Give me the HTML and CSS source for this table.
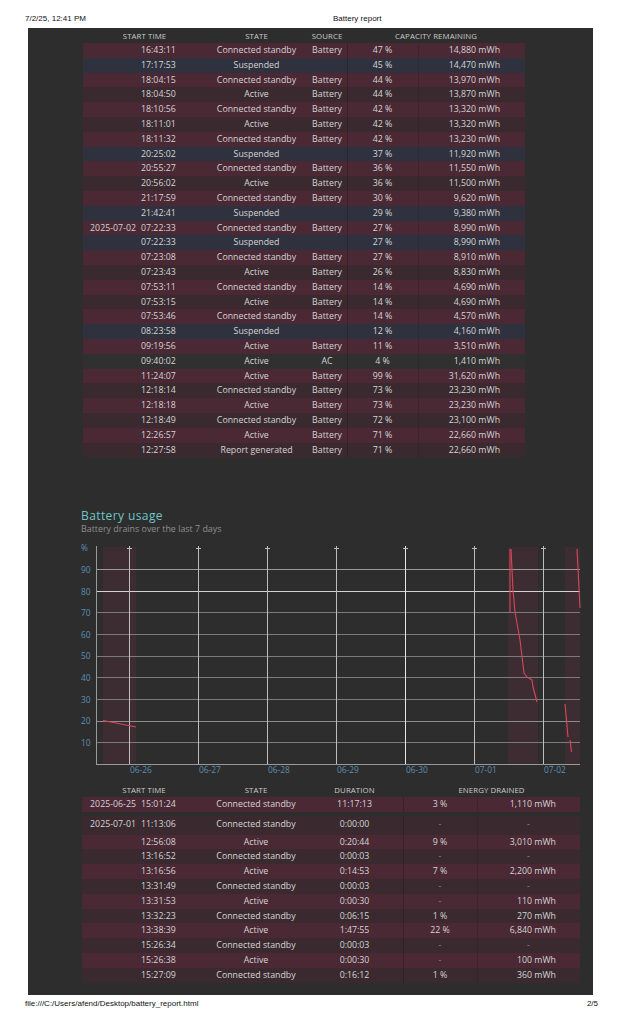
FILE: index.html
```html
<!DOCTYPE html>
<html lang="en">
<head>
<meta charset="utf-8">
<title>Battery report</title>
<link rel="stylesheet" href="styles.css">
</head>
<body>
<header class="print-head">
  <span>7/2/25, 12:41 PM</span>
  <span>Battery report</span>
</header>

<main class="sheet">
  <table class="tbl tbl-recent">
    <colgroup>
      <col class="w-date"><col class="w-time"><col class="w-state1"><col class="w-source"><col class="w-pct1"><col class="w-mwh1">
    </colgroup>
    <thead>
      <tr><td colspan="2">Start time</td><td>State</td><td>Source</td><td colspan="2">Capacity remaining</td></tr>
    </thead>
    <tbody>
      <tr class="odd"><td class="date"></td><td class="time">16:43:11</td><td class="state">Connected standby</td><td class="src">Battery</td><td class="pct">47 %</td><td class="mwh">14,880 mWh</td></tr>
      <tr class="susp"><td class="date"></td><td class="time">17:17:53</td><td class="state">Suspended</td><td class="src"></td><td class="pct">45 %</td><td class="mwh">14,470 mWh</td></tr>
      <tr class="odd"><td class="date"></td><td class="time">18:04:15</td><td class="state">Connected standby</td><td class="src">Battery</td><td class="pct">44 %</td><td class="mwh">13,970 mWh</td></tr>
      <tr class="even"><td class="date"></td><td class="time">18:04:50</td><td class="state">Active</td><td class="src">Battery</td><td class="pct">44 %</td><td class="mwh">13,870 mWh</td></tr>
      <tr class="odd"><td class="date"></td><td class="time">18:10:56</td><td class="state">Connected standby</td><td class="src">Battery</td><td class="pct">42 %</td><td class="mwh">13,320 mWh</td></tr>
      <tr class="even"><td class="date"></td><td class="time">18:11:01</td><td class="state">Active</td><td class="src">Battery</td><td class="pct">42 %</td><td class="mwh">13,320 mWh</td></tr>
      <tr class="odd"><td class="date"></td><td class="time">18:11:32</td><td class="state">Connected standby</td><td class="src">Battery</td><td class="pct">42 %</td><td class="mwh">13,230 mWh</td></tr>
      <tr class="susp"><td class="date"></td><td class="time">20:25:02</td><td class="state">Suspended</td><td class="src"></td><td class="pct">37 %</td><td class="mwh">11,920 mWh</td></tr>
      <tr class="odd"><td class="date"></td><td class="time">20:55:27</td><td class="state">Connected standby</td><td class="src">Battery</td><td class="pct">36 %</td><td class="mwh">11,550 mWh</td></tr>
      <tr class="even"><td class="date"></td><td class="time">20:56:02</td><td class="state">Active</td><td class="src">Battery</td><td class="pct">36 %</td><td class="mwh">11,500 mWh</td></tr>
      <tr class="odd"><td class="date"></td><td class="time">21:17:59</td><td class="state">Connected standby</td><td class="src">Battery</td><td class="pct">30 %</td><td class="mwh">9,620 mWh</td></tr>
      <tr class="susp"><td class="date"></td><td class="time">21:42:41</td><td class="state">Suspended</td><td class="src"></td><td class="pct">29 %</td><td class="mwh">9,380 mWh</td></tr>
      <tr class="odd"><td class="date">2025-07-02</td><td class="time">07:22:33</td><td class="state">Connected standby</td><td class="src">Battery</td><td class="pct">27 %</td><td class="mwh">8,990 mWh</td></tr>
      <tr class="susp"><td class="date"></td><td class="time">07:22:33</td><td class="state">Suspended</td><td class="src"></td><td class="pct">27 %</td><td class="mwh">8,990 mWh</td></tr>
      <tr class="odd"><td class="date"></td><td class="time">07:23:08</td><td class="state">Connected standby</td><td class="src">Battery</td><td class="pct">27 %</td><td class="mwh">8,910 mWh</td></tr>
      <tr class="even"><td class="date"></td><td class="time">07:23:43</td><td class="state">Active</td><td class="src">Battery</td><td class="pct">26 %</td><td class="mwh">8,830 mWh</td></tr>
      <tr class="odd"><td class="date"></td><td class="time">07:53:11</td><td class="state">Connected standby</td><td class="src">Battery</td><td class="pct">14 %</td><td class="mwh">4,690 mWh</td></tr>
      <tr class="even"><td class="date"></td><td class="time">07:53:15</td><td class="state">Active</td><td class="src">Battery</td><td class="pct">14 %</td><td class="mwh">4,690 mWh</td></tr>
      <tr class="odd"><td class="date"></td><td class="time">07:53:46</td><td class="state">Connected standby</td><td class="src">Battery</td><td class="pct">14 %</td><td class="mwh">4,570 mWh</td></tr>
      <tr class="susp"><td class="date"></td><td class="time">08:23:58</td><td class="state">Suspended</td><td class="src"></td><td class="pct">12 %</td><td class="mwh">4,160 mWh</td></tr>
      <tr class="odd"><td class="date"></td><td class="time">09:19:56</td><td class="state">Active</td><td class="src">Battery</td><td class="pct">11 %</td><td class="mwh">3,510 mWh</td></tr>
      <tr class="ac"><td class="date"></td><td class="time">09:40:02</td><td class="state">Active</td><td class="src">AC</td><td class="pct">4 %</td><td class="mwh">1,410 mWh</td></tr>
      <tr class="odd"><td class="date"></td><td class="time">11:24:07</td><td class="state">Active</td><td class="src">Battery</td><td class="pct">99 %</td><td class="mwh">31,620 mWh</td></tr>
      <tr class="even"><td class="date"></td><td class="time">12:18:14</td><td class="state">Connected standby</td><td class="src">Battery</td><td class="pct">73 %</td><td class="mwh">23,230 mWh</td></tr>
      <tr class="odd"><td class="date"></td><td class="time">12:18:18</td><td class="state">Active</td><td class="src">Battery</td><td class="pct">73 %</td><td class="mwh">23,230 mWh</td></tr>
      <tr class="even"><td class="date"></td><td class="time">12:18:49</td><td class="state">Connected standby</td><td class="src">Battery</td><td class="pct">72 %</td><td class="mwh">23,100 mWh</td></tr>
      <tr class="odd"><td class="date"></td><td class="time">12:26:57</td><td class="state">Active</td><td class="src">Battery</td><td class="pct">71 %</td><td class="mwh">22,660 mWh</td></tr>
      <tr class="even"><td class="date"></td><td class="time">12:27:58</td><td class="state">Report generated</td><td class="src">Battery</td><td class="pct">71 %</td><td class="mwh">22,660 mWh</td></tr>
    </tbody>
  </table>

  <section class="usage">
    <h2 class="usage-title">Battery usage</h2>
    <p class="usage-sub">Battery drains over the last 7 days</p>
  </section>

  <svg class="chart" width="515" height="246" viewBox="0 0 515 246" xmlns="http://www.w3.org/2000/svg">
    <!-- shaded drain periods -->
    <g fill="#6e2f40" fill-opacity="0.26">
      <rect x="33" y="10" width="33" height="217"/>
      <rect x="438" y="10" width="30" height="217"/>
      <rect x="495" y="10" width="15" height="217"/>
    </g>
    <!-- horizontal grid -->
    <g stroke="#7b7b7b" stroke-width="1">
      <line x1="26" y1="32.5" x2="510" y2="32.5" stroke="#9a9a9a"/>
      <line x1="26" y1="54.5" x2="510" y2="54.5" stroke="#d2d2d2"/>
      <line x1="26" y1="75.5" x2="510" y2="75.5"/>
      <line x1="26" y1="97.5" x2="510" y2="97.5"/>
      <line x1="26" y1="119.5" x2="510" y2="119.5"/>
      <line x1="26" y1="140.5" x2="510" y2="140.5"/>
      <line x1="26" y1="162.5" x2="510" y2="162.5"/>
      <line x1="26" y1="184.5" x2="510" y2="184.5" stroke="#8c8c8c"/>
      <line x1="26" y1="205.5" x2="510" y2="205.5"/>
    </g>
    <!-- vertical day lines -->
    <g stroke="#bdbdbd" stroke-width="1">
      <line x1="59.5" y1="9" x2="59.5" y2="227"/>
      <line x1="128.5" y1="9" x2="128.5" y2="227"/>
      <line x1="197.5" y1="9" x2="197.5" y2="227"/>
      <line x1="266.5" y1="9" x2="266.5" y2="227"/>
      <line x1="335.5" y1="9" x2="335.5" y2="227" stroke="#e6e6e6"/>
      <line x1="404.5" y1="9" x2="404.5" y2="227"/>
      <line x1="473.5" y1="9" x2="473.5" y2="227"/>
    </g>
    <g stroke="#bdbdbd" stroke-width="1">
      <line x1="57" y1="11.5" x2="62" y2="11.5"/>
      <line x1="126" y1="11.5" x2="131" y2="11.5"/>
      <line x1="195" y1="11.5" x2="200" y2="11.5"/>
      <line x1="264" y1="11.5" x2="269" y2="11.5"/>
      <line x1="333" y1="11.5" x2="338" y2="11.5"/>
      <line x1="402" y1="11.5" x2="407" y2="11.5"/>
      <line x1="471" y1="11.5" x2="476" y2="11.5"/>
    </g>
    <!-- axes -->
    <g stroke="#9a9a9a" stroke-width="1">
      <line x1="26.5" y1="9" x2="26.5" y2="228"/>
      <line x1="26" y1="227.5" x2="510" y2="227.5"/>
    </g>
    <!-- battery level -->
    <g fill="none" stroke="#d5485a" stroke-width="1.1" stroke-linejoin="round">
      <polyline points="33,183.5 66,190"/>
      <polyline points="440,12 440,75"/>
      <polyline points="441,12 443,53 445,75 450,103 454,136 457,140 462,143 463,150 467,165"/>
      <polyline points="495,167 498,200"/>
      <polyline points="500,203 501.5,215"/>
      <polyline points="507,12 510,71"/>
    </g>
    <!-- labels -->
    <g class="axis-label">
      <text x="11" y="13.5">%</text>
      <text x="11" y="35.5">90</text>
      <text x="11" y="57.5">80</text>
      <text x="11" y="78.5">70</text>
      <text x="11" y="100.5">60</text>
      <text x="11" y="122">50</text>
      <text x="11" y="143.5">40</text>
      <text x="11" y="165.5">30</text>
      <text x="11" y="187">20</text>
      <text x="11" y="208.5">10</text>
      <text x="60" y="236">06-26</text>
      <text x="129" y="236">06-27</text>
      <text x="198" y="236">06-28</text>
      <text x="267" y="236">06-29</text>
      <text x="336" y="236">06-30</text>
      <text x="405" y="236">07-01</text>
      <text x="474" y="236">07-02</text>
    </g>
  </svg>

  <table class="tbl tbl-usage">
    <colgroup>
      <col class="w-date2"><col class="w-time"><col class="w-state2"><col class="w-dur"><col class="w-pct2"><col class="w-mwh2">
    </colgroup>
    <thead>
      <tr><td colspan="2">Start time</td><td>State</td><td>Duration</td><td colspan="2">Energy drained</td></tr>
    </thead>
    <tbody>
      <tr class="odd"><td class="date">2025-06-25</td><td class="time">15:01:24</td><td class="state">Connected standby</td><td class="dur">11:17:13</td><td class="pct">3 %</td><td class="mwh">1,110 mWh</td></tr>
      <tr class="gap"><td colspan="6"></td></tr>
      <tr class="even first"><td class="date">2025-07-01</td><td class="time">11:13:06</td><td class="state">Connected standby</td><td class="dur">0:00:00</td><td class="pct nil">-</td><td class="mwh nil">-</td></tr>
      <tr class="odd"><td class="date"></td><td class="time">12:56:08</td><td class="state">Active</td><td class="dur">0:20:44</td><td class="pct">9 %</td><td class="mwh">3,010 mWh</td></tr>
      <tr class="even"><td class="date"></td><td class="time">13:16:52</td><td class="state">Connected standby</td><td class="dur">0:00:03</td><td class="pct nil">-</td><td class="mwh nil">-</td></tr>
      <tr class="odd"><td class="date"></td><td class="time">13:16:56</td><td class="state">Active</td><td class="dur">0:14:53</td><td class="pct">7 %</td><td class="mwh">2,200 mWh</td></tr>
      <tr class="even"><td class="date"></td><td class="time">13:31:49</td><td class="state">Connected standby</td><td class="dur">0:00:03</td><td class="pct nil">-</td><td class="mwh nil">-</td></tr>
      <tr class="odd"><td class="date"></td><td class="time">13:31:53</td><td class="state">Active</td><td class="dur">0:00:30</td><td class="pct nil">-</td><td class="mwh">110 mWh</td></tr>
      <tr class="even"><td class="date"></td><td class="time">13:32:23</td><td class="state">Connected standby</td><td class="dur">0:06:15</td><td class="pct">1 %</td><td class="mwh">270 mWh</td></tr>
      <tr class="odd"><td class="date"></td><td class="time">13:38:39</td><td class="state">Active</td><td class="dur">1:47:55</td><td class="pct">22 %</td><td class="mwh">6,840 mWh</td></tr>
      <tr class="even"><td class="date"></td><td class="time">15:26:34</td><td class="state">Connected standby</td><td class="dur">0:00:03</td><td class="pct nil">-</td><td class="mwh nil">-</td></tr>
      <tr class="odd"><td class="date"></td><td class="time">15:26:38</td><td class="state">Active</td><td class="dur">0:00:30</td><td class="pct nil">-</td><td class="mwh">100 mWh</td></tr>
      <tr class="even"><td class="date"></td><td class="time">15:27:09</td><td class="state">Connected standby</td><td class="dur">0:16:12</td><td class="pct">1 %</td><td class="mwh">360 mWh</td></tr>
    </tbody>
  </table>
</main>

<footer class="print-foot">
  <span>file:///C:/Users/afend/Desktop/battery_report.html</span>
  <span>2/5</span>
</footer>
</body>
</html>
```

FILE: styles.css
```css
html, body {
  margin: 0;
  padding: 0;
  background: #ffffff;
}

body {
  width: 622px;
  height: 1024px;
  overflow: hidden;
  font-family: "Liberation Sans", Arial, sans-serif;
}

.print-head {
  display: grid;
  grid-template-columns: 308px auto;
  padding: 14px 0 4px 25px;
  font-size: 8px;
  line-height: 10px;
  color: #111;
}

.print-foot {
  display: flex;
  justify-content: space-between;
  padding: 4px 24px 0 25px;
  font-size: 8px;
  line-height: 10px;
  color: #111;
}

.sheet {
  box-sizing: border-box;
  margin-left: 28px;
  width: 565px;
  height: 967px;
  padding-top: 1px;
  background: #2d2d2d;
  overflow: hidden;
  font-family: "Open Sans", "Noto Sans", sans-serif;
}

/* tables */
.tbl {
  border-collapse: collapse;
  table-layout: fixed;
  font-size: 8.8px;
  color: #d4d4d4;
}

.tbl td {
  padding: 0;
  height: 14.8px;
  line-height: 14.8px;
  white-space: nowrap;
  overflow: hidden;
}

.tbl thead td {
  height: 14px;
  line-height: 14px;
  font-size: 7.8px;
  text-transform: uppercase;
  text-align: center;
  color: #cbcbcb;
  letter-spacing: 0.1px;
}

.tbl-recent {
  margin-left: 55px;
  width: 442px;
}

.tbl-usage {
  margin-left: 54px;
  width: 498px;
}

.w-date { width: 56px; }
.w-date2 { width: 57px; }
.w-time { width: 67px; }
.w-state1 { width: 101px; }
.w-source { width: 40px; }
.w-pct1 { width: 71px; }
.w-mwh1 { width: 107px; }
.w-state2 { width: 100px; }
.w-dur { width: 97px; }
.w-pct2 { width: 74px; }
.w-mwh2 { width: 103px; }

.tbl .date {
  text-align: right;
  padding-right: 3px;
}

.tbl .time {
  text-align: left;
  padding-left: 2px;
}

.tbl .state,
.tbl .src,
.tbl .dur,
.tbl .pct {
  text-align: center;
}

.tbl .pct {
  box-shadow: inset 1px 0 0 rgba(0, 0, 0, 0.2);
}

.tbl .mwh {
  text-align: right;
  padding-right: 25px;
  box-shadow: inset 1px 0 0 rgba(0, 0, 0, 0.12);
}

.tbl-usage .mwh {
  padding-right: 24px;
}

.tbl .nil {
  text-align: center;
  padding-right: 0;
  color: #8c8c8c;
}

.tbl tr.odd { background: #4a2834; }
.tbl tr.even { background: #3a2a30; }
.tbl tr.susp { background: #2f323e; }
.tbl tr.ac { background: #303030; }

.tbl tr.gap td {
  height: 4px;
  line-height: 4px;
  box-shadow: none;
}

.tbl tr.first td {
  height: 16.5px;
  line-height: 16.5px;
  padding-bottom: 2px;
}

.tbl tr.first td.date { padding-right: 3px; }

/* usage section */
.usage {
  margin: 52px 0 0 53px;
}

.usage-title {
  margin: 0;
  font-size: 12px;
  line-height: 14px;
  font-weight: 400;
  letter-spacing: 0.4px;
  color: #6fc5c9;
}

.usage-sub {
  margin: 0;
  font-size: 8.9px;
  line-height: 11px;
  color: #8e8e8e;
}

.chart {
  display: block;
  margin: 3px 0 0 42px;
}

.axis-label {
  font-family: "Open Sans", "Noto Sans", sans-serif;
  font-size: 8.4px;
  fill: #5c8db2;
}
```
